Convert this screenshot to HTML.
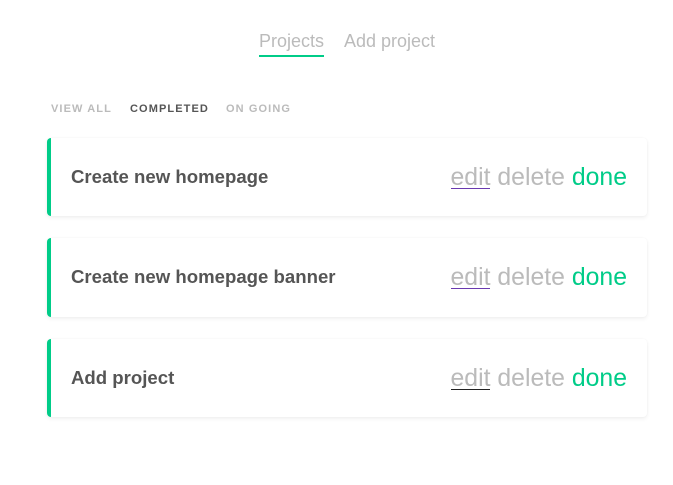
<!DOCTYPE html>
<html><head><style>
body{margin:0;width:673px;height:485px;background:#fff;font-family:"Liberation Sans",sans-serif;position:relative;overflow:hidden}
.nav{position:absolute;top:31px;left:259px;font-size:18px;color:#bbb}
.nav span{position:absolute;white-space:nowrap}
.ul{position:absolute;left:259px;top:55px;width:65px;height:2px;background:#00cc88}
.f{position:absolute;top:103px;font-size:11px;font-weight:bold;letter-spacing:1.1px;color:#bbb}
.card{position:absolute;left:47px;width:600px;background:#fff;border-left:4px solid #00cc88;border-radius:4px;box-shadow:0 2px 4px rgba(0,0,0,0.06),0 0 2px rgba(0,0,0,0.04);box-sizing:border-box}
.t{position:absolute;left:20px;font-size:18.6px;font-weight:bold;color:#555;white-space:nowrap}
.a{position:absolute;right:20px;font-size:24.8px;color:#bbb;white-space:nowrap}
.a .e,.a .e2{display:inline-block;line-height:21px;border-bottom:1px solid #6a3ab0}
.a .e2{border-bottom-color:#222}
.a .d{color:#00cc88}
</style></head><body>
<div class="nav"><span style="left:0">Projects</span><span style="left:85px">Add project</span></div>
<div class="ul"></div>
<div class="f" style="left:51px">VIEW ALL</div>
<div class="f" style="left:130px;color:#555">COMPLETED</div>
<div class="f" style="left:226px">ON GOING</div>

<div class="card" style="top:138px;height:78px"><div class="t" style="top:28px">Create new homepage</div><div class="a" style="top:26px"><span class="e">edit</span> delete <span class="d">done</span></div></div>
<div class="card" style="top:238px;height:79px"><div class="t" style="top:28px">Create new homepage banner</div><div class="a" style="top:26px"><span class="e">edit</span> delete <span class="d">done</span></div></div>
<div class="card" style="top:339px;height:78px"><div class="t" style="top:28px">Add project</div><div class="a" style="top:26px"><span class="e2">edit</span> delete <span class="d">done</span></div></div>
</body></html>
